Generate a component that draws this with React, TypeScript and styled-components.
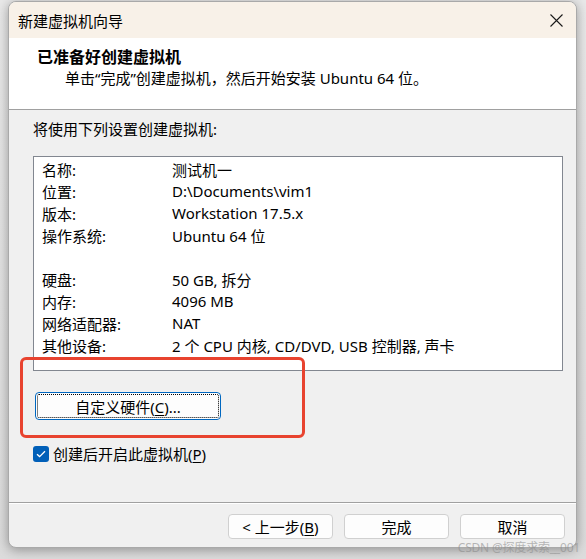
import styled, { createGlobalStyle } from "styled-components";

const GlobalStyle = createGlobalStyle`
  html, body {
    margin: 0;
    padding: 0;
    background: #e6e6e6;
  }
  body {
    font-family: "Noto Sans", "Noto Sans CJK SC", sans-serif;
    color: #000;
  }
`;

const Page = styled.div`
  position: relative;
  width: 586px;
  height: 559px;
  overflow: hidden;
  background: linear-gradient(#e9e9e9, #dcdcdc);
`;

const Window = styled.div`
  margin: 1px 0 0 8px;
  width: 569px;
  height: 547px;
  box-sizing: border-box;
  border: 1px solid #a9a9a9;
  border-radius: 8px;
  overflow: hidden;
  display: flex;
  flex-direction: column;
  background: #f0f0f0;
  box-shadow: 0 2px 12px rgba(0, 0, 0, 0.35);
`;

const TitleBar = styled.div`
  height: 36px;
  flex: none;
  display: flex;
  align-items: center;
  justify-content: space-between;
  padding: 0 13px 0 9px;
  background: #f8f1e8;
  font-size: 15px;
`;

const CloseIcon = styled.svg`
  width: 13px;
  height: 13px;
`;

const Header = styled.div`
  height: 72px;
  flex: none;
  box-sizing: border-box;
  padding: 8px 0 0 28px;
  background: #fff;
  border-bottom: 1px solid #a0a0a0;
`;

const Heading = styled.div`
  font-size: 16px;
  font-weight: 700;
  line-height: 22px;
`;

const SubText = styled.div`
  margin-left: 28px;
  font-size: 15px;
  line-height: 20px;
`;

const Body = styled.div`
  flex: 1;
  padding: 9px 14px 0 24px;
  border-bottom: 1px solid #a0a0a0;
`;

const Label = styled.div`
  font-size: 15px;
  line-height: 20px;
`;

const ListBox = styled.div`
  margin-top: 17px;
  width: 530px;
  height: 215px;
  box-sizing: border-box;
  border: 1px solid #828790;
  background: #fff;
  padding: 1px 0 0 8px;
`;

const Row = styled.div`
  display: grid;
  grid-template-columns: 130px 1fr;
  height: 22px;
  align-items: center;
  font-size: 15px;
  white-space: nowrap;
`;

const CustomButton = styled.button`
  margin: 21px 0 0 2px;
  width: 186px;
  height: 28px;
  border: 1px solid #0067c0;
  border-radius: 4px;
  background: #fdfdfd;
  font: inherit;
  font-size: 15px;
  color: #000;
  outline: 1px dotted #000;
  outline-offset: -3px;
  padding: 0;
`;

const CheckRow = styled.label`
  margin-top: 23px;
  display: flex;
  align-items: center;
  gap: 4px;
  font-size: 15px;
`;

const CheckBox = styled.span`
  width: 16px;
  height: 16px;
  border-radius: 3px;
  background: #005fb8;
  display: flex;
  align-items: center;
  justify-content: center;
`;

const Footer = styled.div`
  height: 44px;
  flex: none;
  box-shadow: inset 0 1px #ffffff;
  display: flex;
  justify-content: flex-end;
  align-items: flex-start;
  gap: 11px;
  padding: 11px 11px 0 0;
  box-sizing: border-box;
`;

const FooterButton = styled.button`
  width: 105px;
  height: 25px;
  border: 1px solid #d0d0d0;
  border-radius: 4px;
  background: #fdfdfd;
  font: inherit;
  font-size: 15px;
  color: #000;
  padding: 0;
`;

const U = styled.span`
  text-decoration: underline;
  text-underline-offset: 2px;
`;

const Annotation = styled.div`
  position: absolute;
  left: 20px;
  top: 357px;
  width: 285px;
  height: 81px;
  box-sizing: border-box;
  border: 3px solid #e8432f;
  border-radius: 6px;
  pointer-events: none;
`;

const Watermark = styled.div`
  position: absolute;
  right: 6px;
  bottom: 3px;
  font-size: 12px;
  color: rgba(140, 140, 140, 0.6);
  letter-spacing: -0.2px;
`;

const rows: [string, string][] = [
  ["名称:", "测试机一"],
  ["位置:", "D:\\Documents\\vim1"],
  ["版本:", "Workstation 17.5.x"],
  ["操作系统:", "Ubuntu 64 位"],
  ["", ""],
  ["硬盘:", "50 GB, 拆分"],
  ["内存:", "4096 MB"],
  ["网络适配器:", "NAT"],
  ["其他设备:", "2 个 CPU 内核, CD/DVD, USB 控制器, 声卡"],
];

function App() {
  return (
    <Page>
      <GlobalStyle />
      <Window>
        <TitleBar>
          <span>新建虚拟机向导</span>
          <CloseIcon viewBox="0 0 13 13">
            <path d="M0.5 0.5 L12.5 12.5 M12.5 0.5 L0.5 12.5" stroke="#1a1a1a" strokeWidth="1.1" fill="none" />
          </CloseIcon>
        </TitleBar>
        <Header>
          <Heading>已准备好创建虚拟机</Heading>
          <SubText>单击“完成”创建虚拟机，然后开始安装 Ubuntu 64 位。</SubText>
        </Header>
        <Body>
          <Label>将使用下列设置创建虚拟机:</Label>
          <ListBox>
            {rows.map(([k, v], i) => (
              <Row key={i}>
                <span>{k}</span>
                <span>{v}</span>
              </Row>
            ))}
          </ListBox>
          <CustomButton>
            自定义硬件(<U>C</U>)...
          </CustomButton>
          <CheckRow>
            <CheckBox>
              <svg width="10" height="8" viewBox="0 0 10 8">
                <path d="M1 4.2 L3.6 6.6 L9 1.2" stroke="#fff" strokeWidth="1.3" fill="none" />
              </svg>
            </CheckBox>
            <span>
              创建后开启此虚拟机(<U>P</U>)
            </span>
          </CheckRow>
        </Body>
        <Footer>
          <FooterButton>
            &lt; 上一步(<U>B</U>)
          </FooterButton>
          <FooterButton>完成</FooterButton>
          <FooterButton>取消</FooterButton>
        </Footer>
      </Window>
      <Annotation />
      <Watermark>CSDN @探度求索__001</Watermark>
    </Page>
  );
}

export default App;
